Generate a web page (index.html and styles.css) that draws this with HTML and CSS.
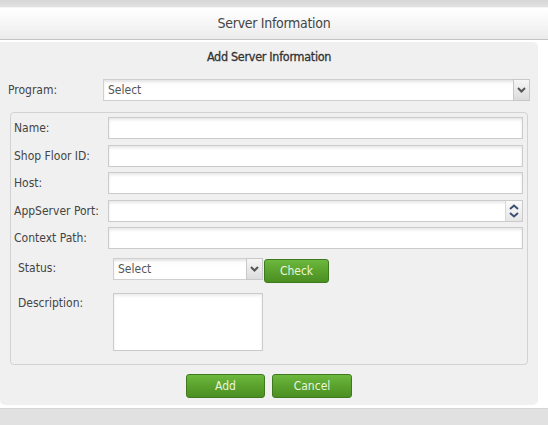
FILE: index.html
```html
<!DOCTYPE html>
<html>
<head>
<meta charset="utf-8">
<link rel="stylesheet" href="styles.css">
</head>
<body>
<div class="topbar"></div>
<div class="title">Server Information</div>
<div class="wrap">
  <div class="panel">
    <div class="heading">Add Server Information</div>
    <div class="prog-row">
      <label class="prog-label">Program:</label>
      <div class="select wide">
        <span class="select-text">Select</span>
        <span class="arrow"><svg width="9" height="6" viewBox="0 0 9 6"><path d="M1 1 L4.5 4.5 L8 1" fill="none" stroke="#555" stroke-width="2"/></svg></span>
      </div>
    </div>
    <div class="fieldset">
      <div class="row"><label class="lbl">Name:</label><div class="input"></div></div>
      <div class="row"><label class="lbl">Shop Floor ID:</label><div class="input"></div></div>
      <div class="row"><label class="lbl">Host:</label><div class="input"></div></div>
      <div class="row"><label class="lbl">AppServer Port:</label><div class="input spin-input">
        <span class="spinner">
          <svg width="10" height="6" viewBox="0 0 10 6"><path d="M1 5 L5 1.5 L9 5" fill="none" stroke="#3d4f73" stroke-width="2"/></svg>
          <svg width="10" height="6" viewBox="0 0 10 6"><path d="M1 1 L5 4.5 L9 1" fill="none" stroke="#3d4f73" stroke-width="2"/></svg>
        </span>
      </div></div>
      <div class="row"><label class="lbl">Context Path:</label><div class="input"></div></div>
      <div class="status-row">
        <label class="lbl2">Status:</label>
        <div class="select small">
          <span class="select-text">Select</span>
          <span class="arrow"><svg width="9" height="6" viewBox="0 0 9 6"><path d="M1 1 L4.5 4.5 L8 1" fill="none" stroke="#555" stroke-width="2"/></svg></span>
        </div>
        <button class="btn check">Check</button>
      </div>
      <div class="desc-row">
        <label class="lbl2">Description:</label>
        <div class="textarea"></div>
      </div>
    </div>
    <div class="actions">
      <button class="btn add">Add</button>
      <button class="btn cancel">Cancel</button>
    </div>
  </div>
</div>
<div class="footer"></div>
</body>
</html>
```
FILE: styles.css
```css
* { box-sizing: border-box; }
html, body { margin: 0; padding: 0; }
body {
  width: 548px;
  height: 425px;
  overflow: hidden;
  background: #fff;
  font-family: "DejaVu Sans Condensed", "DejaVu Sans", sans-serif;
  font-size: 12px;
  color: #444;
}
.topbar {
  height: 8px;
  background: linear-gradient(#d6d6d6, #e2e2e2);
  border-bottom: 1px solid #f4f4f4;
}
.title {
  height: 32px;
  background: linear-gradient(#ffffff, #f6f6f6 50%, #ebebeb);
  border-bottom: 1px solid #c4c4c4;
  text-align: center;
  font-size: 14px;
  letter-spacing: -0.3px;
  line-height: 31px;
  color: #454545;
}
.wrap {
  padding: 2px 10px 3px 0;
  background: #fff;
}
.panel {
  background: #f0f0f0;
  border-radius: 0 5px 5px 5px;
  height: 363px;
  padding: 8px 0 0 0;
}
.heading {
  text-align: center;
  font-size: 12.5px;
  letter-spacing: -0.3px;
  line-height: 14px;
  color: #333;
  -webkit-text-stroke: 0.3px #333;
  margin-bottom: 15px;
}
.prog-row {
  display: flex;
  align-items: center;
  padding-left: 8px;
  margin-bottom: 11px;
}
.prog-label { width: 95px; color: #444; }
.select {
  display: flex;
  align-items: center;
  height: 22px;
  background: linear-gradient(#fafafa, #ffffff 40%);
  border: 1px solid #cfcfcf;
  box-shadow: inset 0 2px 2px #e6e6e6;
}
.select.wide { width: 427px; }
.select.small { width: 150px; }
.select-text { flex: 1; padding-left: 4px; color: #555; }
.arrow {
  width: 17px;
  align-self: stretch;
  margin: -1px -1px -1px 0;
  border: 1px solid #c8c8c8;
  background: linear-gradient(#f6f6f6, #dcdcdc);
  display: flex;
  align-items: center;
  justify-content: center;
}
.fieldset {
  margin-left: 10px;
  width: 518px;
  border: 1px solid #d2d2d2;
  border-radius: 4px;
  padding: 4px 4px 13px 3px;
  display: flex;
  flex-direction: column;
  gap: 5.5px;
}
.row { display: flex; align-items: center; }
.lbl { width: 94px; color: #444; }
.input {
  flex: 1;
  height: 22px;
  background: #fff;
  border: 1px solid #cbcbcb;
  box-shadow: inset 0 2px 3px #e8e8e8;
}
.spin-input { display: flex; justify-content: flex-end; }
.spinner {
  width: 17px;
  display: flex;
  flex-direction: column;
  align-items: center;
  justify-content: center;
  gap: 2px;
  background: linear-gradient(#fafafa, #e6e6e6);
  border-left: 1px solid #d8d8d8;
}
.spinner svg { display: block; }
.status-row {
  display: flex;
  align-items: flex-start;
  padding-left: 4px;
  margin-top: 3.5px;
}
.lbl2 { width: 95px; color: #444; line-height: 20px; }
.btn {
  font-family: inherit;
  font-size: 12px;
  color: #e9f5df;
  background: linear-gradient(#6db83e, #5aa22d 50%, #4b8f22);
  border: 1px solid #3e7a1d;
  border-radius: 3px;
  padding: 0;
  height: 23px;
  cursor: pointer;
}
.check { width: 65px; margin: 1px 0 0 1px; height: 24px; }
.desc-row {
  display: flex;
  align-items: flex-start;
  padding-left: 4px;
  margin-top: 4px;
}
.textarea {
  width: 150px;
  height: 58px;
  background: #fff;
  border: 1px solid #cbcbcb;
  box-shadow: inset 0 2px 3px #ececec;
}
.actions {
  display: flex;
  justify-content: center;
  gap: 7px;
  margin-top: 9px;
}
.add { width: 79px; height: 24px; }
.cancel { width: 80px; height: 24px; }
.footer {
  height: 17px;
  background: #e1e1e1;
  border-top: 1px solid #d6d6d6;
}
```
